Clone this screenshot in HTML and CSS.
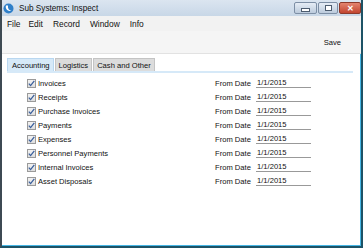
FILE: index.html
```html
<!DOCTYPE html>
<html lang="en">
<head>
  <meta charset="UTF-8" />
  <title>Sub Systems: Inspect</title>
  <link rel="stylesheet" href="styles.css">
</head>
<body>
  <div class="window">
    <!-- Title bar -->
    <div class="titlebar">
      <svg class="app-icon" width="11" height="11" viewBox="0 0 11 11">
        <circle cx="5.5" cy="5.5" r="5" fill="#2f7fc9" />
        <path d="M3 2.5 C2 5, 4 8.5, 8.5 8 C6 7.5, 4.5 5.5, 5 2.5 Z" fill="#fff" />
      </svg>
      <span class="title">Sub Systems: Inspect</span>
      <div class="win-btns">
        <span class="wbtn min"><i class="bar"></i></span>
        <span class="wbtn max"><i class="box"></i></span>
        <span class="wbtn close">&#x2715;</span>
      </div>
    </div>

    <!-- Menu -->
    <div class="menubar">
      <span>File</span>
      <span>Edit</span>
      <span>Record</span>
      <span>Window</span>
      <span>Info</span>
    </div>

    <!-- Toolbar -->
    <div class="toolbar">
      <span class="save">Save</span>
    </div>

    <!-- Tabs -->
    <div class="content">
      <div class="tabs">
        <span class="tab active">Accounting</span>
        <span class="tab">Logistics</span>
        <span class="tab">Cash and Other</span>
      </div>
      <div class="pane">
        <div class="rows" id="rows"></div>
      </div>
    </div>
  </div>

  <script>
    const systems = ["Invoices", "Receipts", "Purchase Invoices", "Payments", "Expenses",
      "Personnel Payments", "Internal Invoices", "Asset Disposals"];

    const rows = document.getElementById("rows");
    systems.forEach(name => {
      const row = document.createElement("div");
      row.className = "row";
      row.innerHTML = `
        <span class="check"><svg width="7" height="7" viewBox="0 0 7 7"><path d="M0.8 3.6 L2.6 5.6 L6.3 0.8" fill="none" stroke="#3a5f9c" stroke-width="1.3"/></svg></span>
        <span class="label">${name}</span>
        <span class="from">From Date</span>
        <span class="field">1/1/2015</span>
      `;
      rows.appendChild(row);
    });
  </script>
</body>
</html>
```

FILE: styles.css
```css
body {
  margin: 0;
  font-family: "Liberation Sans", Arial, sans-serif;
  color: #111;
  background: #1d5366;
}
.window {
  width: 363px;
  height: 248px;
  box-sizing: border-box;
  display: flex;
  flex-direction: column;
  border-left: 2px solid #3e4a53;
  border-right: 2px solid #1d5366;
  border-bottom: 2px solid #1d5366;
  background: #fff;
}
.titlebar {
  height: 16px;
  display: flex;
  align-items: center;
  background: linear-gradient(#dbe5f0, #c8d7e7);
  padding-left: 1px;
}
.app-icon {
  margin-right: 5px;
}
.title {
  font-size: 8.2px;
  color: #111;
}
.win-btns {
  margin-left: auto;
  display: flex;
  gap: 1px;
  align-self: flex-start;
  margin-top: 2px;
}
.wbtn {
  height: 12px;
  border: 1px solid #7d8fa5;
  border-radius: 2px;
  box-sizing: border-box;
  background: linear-gradient(#e6edf5, #bccbdc);
  display: flex;
  align-items: center;
  justify-content: center;
}
.wbtn.min {
  width: 23px;
}
.wbtn.max {
  width: 20px;
}
.wbtn.close {
  width: 22px;
  background: linear-gradient(#e4846f, #c24530);
  border-color: #8c3a2c;
  color: #fff;
  font-size: 8px;
  font-weight: bold;
}
.bar {
  width: 7px;
  height: 2px;
  margin-top: 3px;
  background: #fff;
  border: 1px solid #4d5d70;
}
.box {
  width: 5px;
  height: 4px;
  border: 1px solid #4d5d70;
  background: #fff;
}
.menubar {
  height: 15px;
  display: flex;
  align-items: center;
  background: #f2f2f2;
  font-size: 8.4px;
  padding-left: 5px;
}
.menubar span {
  margin-right: 8px;
}
.menubar span:nth-child(2),
.menubar span:nth-child(3),
.menubar span:nth-child(4) {
  margin-right: 10px;
}
.toolbar {
  height: 22px;
  display: flex;
  align-items: center;
  justify-content: flex-end;
  background: #f5f5f5;
  border-bottom: 1px solid #e2e2e2;
  padding-right: 20px;
  font-size: 7.6px;
}
.content {
  flex: 1;
  display: flex;
  flex-direction: column;
  border-right: 1px solid #46b7e6;
  border-bottom: 1px solid #46b7e6;
  padding: 4px 5px 0 5px;
}
.tabs {
  display: flex;
  gap: 1px;
  height: 13px;
}
.tab {
  font-size: 7.6px;
  padding: 0 3px;
  display: flex;
  align-items: center;
  background: #dcdcdc;
  border: 1px solid #c4c4c4;
  border-bottom: none;
}
.tab.active {
  background: #d6e9f8;
  border-color: #b9d7f0;
  padding: 0 3px 0 4px;
}
.pane {
  flex: 1;
  border-top: 2px solid #d6e9f8;
  margin-right: 2px;
}
.rows {
  padding-top: 3px;
}
.row {
  display: grid;
  grid-template-columns: 10px 178px 41px 55px;
  align-items: center;
  height: 14px;
  padding-left: 20px;
  font-size: 7.6px;
}
.check {
  width: 9px;
  height: 9px;
  box-sizing: border-box;
  border: 1px solid #9a9a9a;
  background: linear-gradient(#f2f2f2, #dedede);
  display: flex;
  align-items: center;
  justify-content: center;
}
.label {
  padding-left: 1px;
}
.field {
  border-bottom: 1px solid #999;
  padding-left: 1px;
  line-height: 9px;
}
```
